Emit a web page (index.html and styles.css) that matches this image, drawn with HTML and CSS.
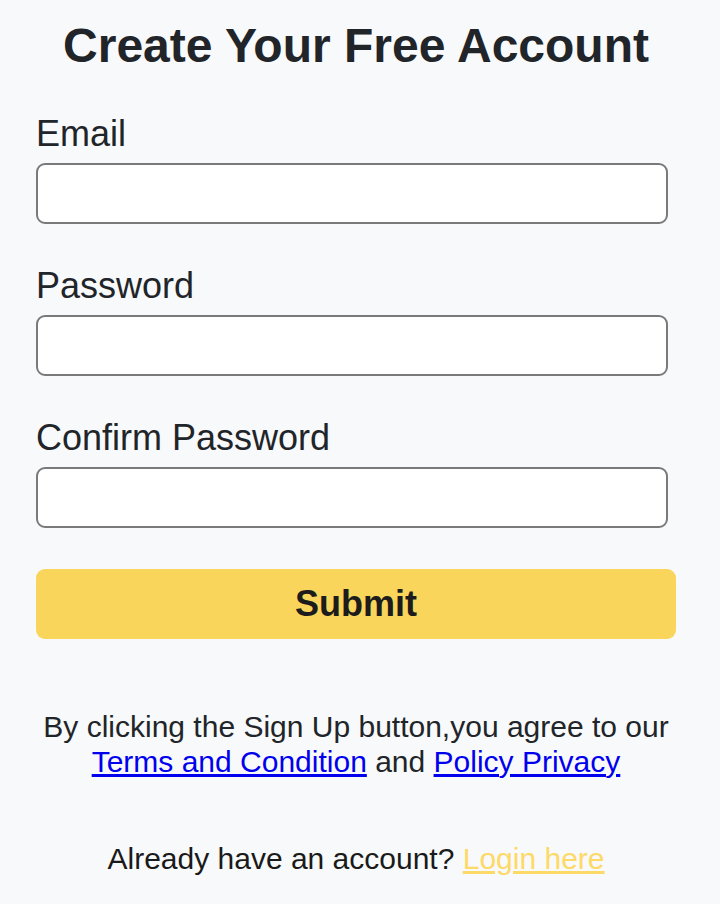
FILE: index.html
```html
<!DOCTYPE html>
<html lang="en">
<head>
<meta charset="utf-8">
<title>Create Your Free Account</title>
<link rel="stylesheet" href="styles.css">
</head>
<body>
<main class="page">
  <h1 class="title">Create Your Free Account</h1>
  <form class="form">
    <label class="field">
      <span class="label">Email</span>
      <input class="input" type="email">
    </label>
    <label class="field">
      <span class="label">Password</span>
      <input class="input" type="password">
    </label>
    <label class="field">
      <span class="label">Confirm Password</span>
      <input class="input" type="password">
    </label>
    <button class="submit" type="button">Submit</button>
  </form>
  <p class="terms">By clicking the Sign Up button,you agree to our <a href="#" class="link">Terms and Condition</a> and <a href="#" class="link">Policy Privacy</a></p>
  <p class="login">Already have an account? <a href="#" class="login-link">Login here</a></p>
</main>
</body>
</html>
```

FILE: styles.css
```css
html, body {
  margin: 0;
  padding: 0;
  background: #f8f9fa;
}

body {
  font-family: "Liberation Sans", Arial, Helvetica, sans-serif;
  color: #212529;
}

.page {
  width: 640px;
  padding: 19px 44px 0 36px;
  display: flex;
  flex-direction: column;
}

.title {
  margin: 0;
  font-size: 48px;
  font-weight: bold;
  line-height: 54px;
  text-align: center;
  color: #212529;
}

.form {
  margin-top: 41px;
  display: flex;
  flex-direction: column;
}

.field {
  display: flex;
  flex-direction: column;
  margin-bottom: 42px;
}

.field:nth-child(3) {
  margin-bottom: 41px;
}

.label {
  font-size: 36px;
  line-height: 40px;
  margin-bottom: 9px;
}

.input {
  box-sizing: border-box;
  width: 632px;
  height: 61px;
  margin: 0;
  border: 2px solid #7a7a7a;
  border-radius: 9px;
  background: #ffffff;
  font-size: 28px;
  padding: 0 12px;
  outline: none;
}

.submit {
  box-sizing: border-box;
  width: 640px;
  height: 70px;
  margin: 0;
  border: none;
  border-radius: 9px;
  background: #f9d55b;
  color: #1c1c1c;
  font-family: "Liberation Sans", Arial, Helvetica, sans-serif;
  font-size: 36px;
  font-weight: bold;
  cursor: pointer;
}

.terms {
  margin: 71px 0 0;
  font-size: 30px;
  line-height: 34.5px;
  text-align: center;
}

.link {
  color: #0000ee;
  text-decoration: underline;
}

.login {
  margin: 63px 0 0;
  font-size: 30px;
  line-height: 34.5px;
  text-align: center;
  color: #1a1a1a;
}

.login-link {
  color: #fdd968;
  text-decoration: underline;
}
```
